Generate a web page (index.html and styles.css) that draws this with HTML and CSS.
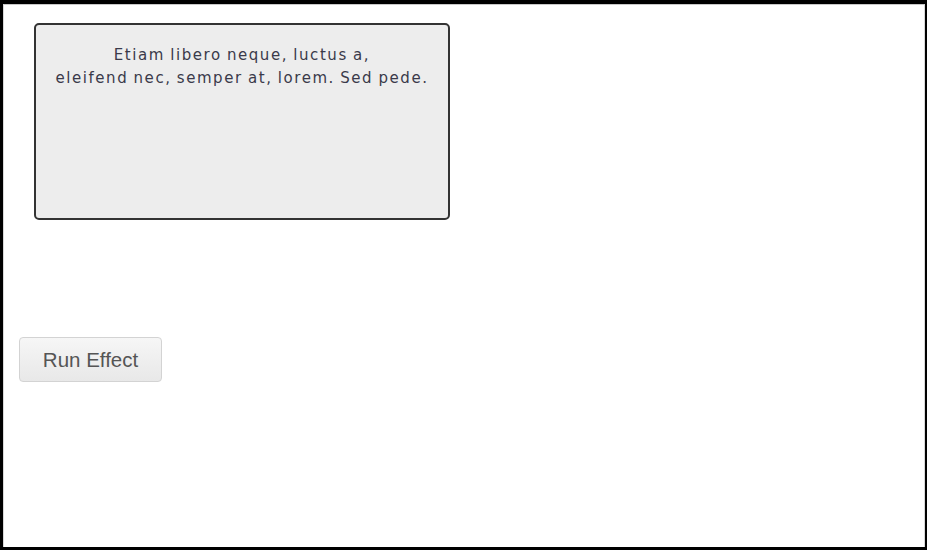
FILE: index.html
```html
<!DOCTYPE html>
<html>
<head>
<meta charset="utf-8">
<link rel="stylesheet" href="styles.css">
</head>
<body>
<div class="frame">
  <div class="inner">
    <div class="toggler">
      <div class="effect">
        <p class="text">Etiam libero neque, luctus a,<br>eleifend nec, semper at, lorem. Sed pede.</p>
      </div>
    </div>
    <button class="button">Run Effect</button>
  </div>
</div>
</body>
</html>
```
FILE: styles.css
```css
html, body {
  margin: 0;
  padding: 0;
  background: #000;
}
.frame {
  width: 927px;
  height: 550px;
  box-sizing: border-box;
  border-style: solid;
  border-color: #000;
  border-width: 4px 2px 3px 3px;
}
.inner {
  height: 100%;
  box-sizing: border-box;
  background: #fff;
  border-top: 1px solid #c8c8c8;
  border-left: 1px solid #d8d8d8;
  border-right: 1px solid #d8d8d8;
  padding: 18px 0 0 15px;
}
.toggler {
  height: 314px;
  padding-left: 15px;
}
.effect {
  width: 416px;
  height: 197px;
  box-sizing: border-box;
  background: #ededed;
  border: 2px solid #333;
  border-radius: 5px;
}
.text {
  margin: 19px 0 0 0;
  text-align: center;
  font-family: "DejaVu Sans", sans-serif;
  font-size: 15px;
  letter-spacing: 1.55px;
  word-spacing: -1px;
  line-height: 23px;
  color: #3a3a4a;
}
.button {
  display: block;
  width: 143px;
  height: 45px;
  box-sizing: border-box;
  margin: 0;
  padding: 0;
  border: 1px solid #d3d3d3;
  border-radius: 4px;
  background: linear-gradient(#f6f6f6, #e8e8e8);
  font-family: "Liberation Sans", Arial, sans-serif;
  font-size: 20.5px;
  color: #555;
}
```
